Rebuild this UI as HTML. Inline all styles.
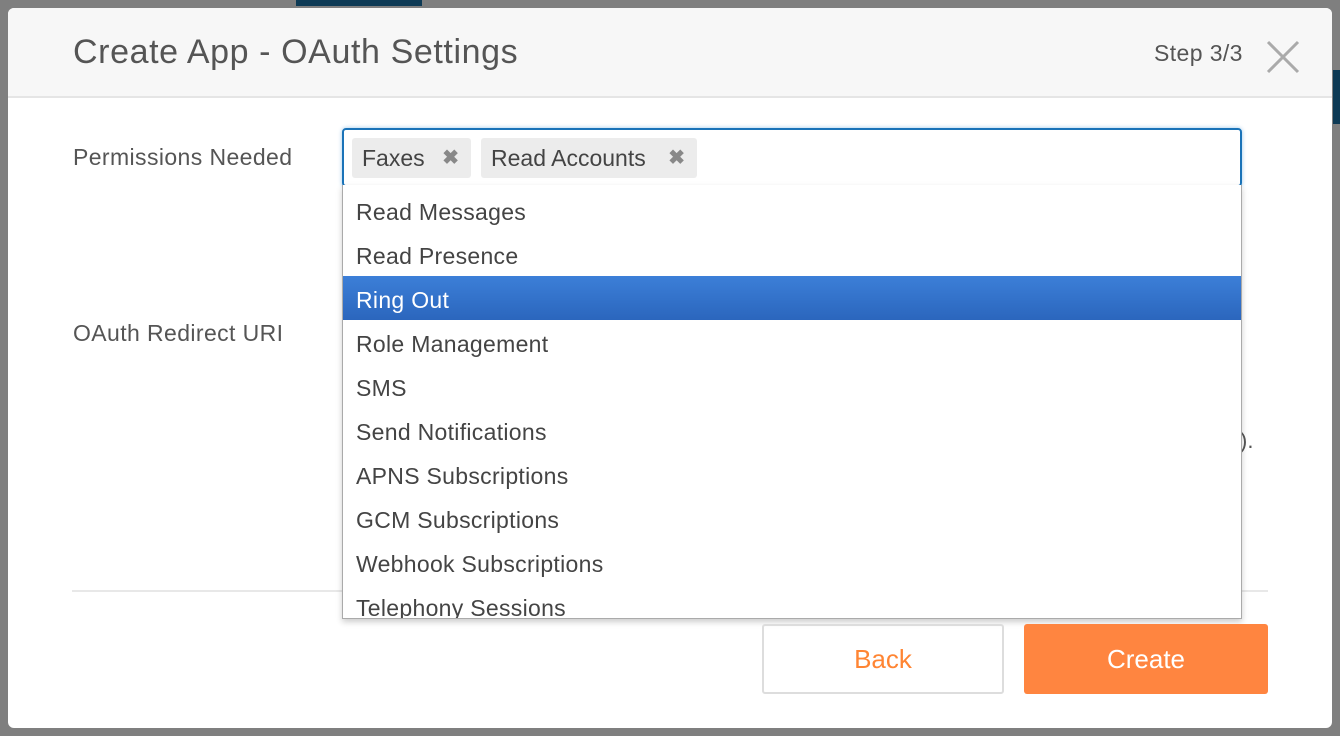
<!DOCTYPE html>
<html><head><style>
body{margin:0;width:1340px;height:736px;background:#7f7f7f;font-family:"Liberation Sans",sans-serif;position:relative;overflow:hidden;color:#555}
.bgt{position:absolute;left:296px;top:0;width:126px;height:6px;background:#0d3a55}
.bgr{position:absolute;left:1333px;top:70px;width:7px;height:54px;background:#0d3a55}
.modal{position:absolute;left:8px;top:8px;width:1324px;height:720px;background:#fff;border-radius:6px;overflow:hidden}
.hdr{height:88px;background:#f7f7f7;border-bottom:2px solid #e5e5e5;position:relative}
.title{position:absolute;left:65px;top:25px;font-size:34px;color:#555;letter-spacing:0.6px}
.step{position:absolute;left:1146px;top:32px;font-size:23px;color:#555;letter-spacing:0.4px}
.x{position:absolute;left:1258px;top:32px}
.lbl{position:absolute;left:65px;font-size:23px;color:#555;letter-spacing:0.4px}
.inp{position:absolute;left:334px;top:120px;width:896px;height:55px;border:2px solid #1a73b8;border-radius:4px;box-shadow:0 0 4px #9cc7e8}
.tag{position:absolute;top:8px;height:40px;background:#ececec;border-radius:3px;font-size:23px;line-height:40px;padding-left:10px;color:#444}
.tag b{color:#888;font-size:20px;position:absolute;right:12px}
.dd{position:absolute;left:334px;top:177px;width:898px;height:430px;border:1px solid #aaa;border-top:none;background:#fff;box-shadow:0 3px 6px rgba(0,0,0,.2);overflow:hidden}
.it{height:44px;line-height:48px;padding-left:13px;font-size:23px;color:#444;letter-spacing:0.3px}
.sel{background:linear-gradient(#3c7fd8,#2b66bd);color:#fff}
.line{position:absolute;left:64px;top:582px;width:1196px;height:2px;background:#e8e8e8}
.btn{position:absolute;top:616px;height:70px;border-radius:3px;font-size:26px;text-align:center;line-height:70px}
</style></head><body>
<div class="bgt"></div><div class="bgr"></div>
<div class="modal">
<div class="hdr"><div class="title">Create App - OAuth Settings</div><div class="step">Step 3/3</div>
<svg class="x" width="34" height="34"><path d="M2 2L32 32M32 2L2 32" stroke="#aaa" stroke-width="3"/></svg></div>
<div class="lbl" style="top:136px">Permissions Needed</div>
<div class="lbl" style="top:312px">OAuth Redirect URI</div>
<div style="position:absolute;left:1232px;top:420px;font-size:22px">).</div>
<div class="line"></div>
<div class="inp">
<div class="tag" style="left:8px;width:109px">Faxes<b>✖</b></div>
<div class="tag" style="left:137px;width:206px">Read Accounts<b>✖</b></div>
</div>
<div class="dd" style="padding-top:3px">
<div class="it">Read Messages</div><div class="it">Read Presence</div><div class="it sel">Ring Out</div><div class="it">Role Management</div><div class="it">SMS</div><div class="it">Send Notifications</div><div class="it">APNS Subscriptions</div><div class="it">GCM Subscriptions</div><div class="it">Webhook Subscriptions</div><div class="it">Telephony Sessions</div>
</div>
<div class="btn" style="left:754px;width:238px;border:2px solid #ddd;color:#ff8533;height:66px;line-height:66px">Back</div>
<div class="btn" style="left:1016px;width:244px;background:#ff8540;color:#fff">Create</div>
</div>
</body></html>
